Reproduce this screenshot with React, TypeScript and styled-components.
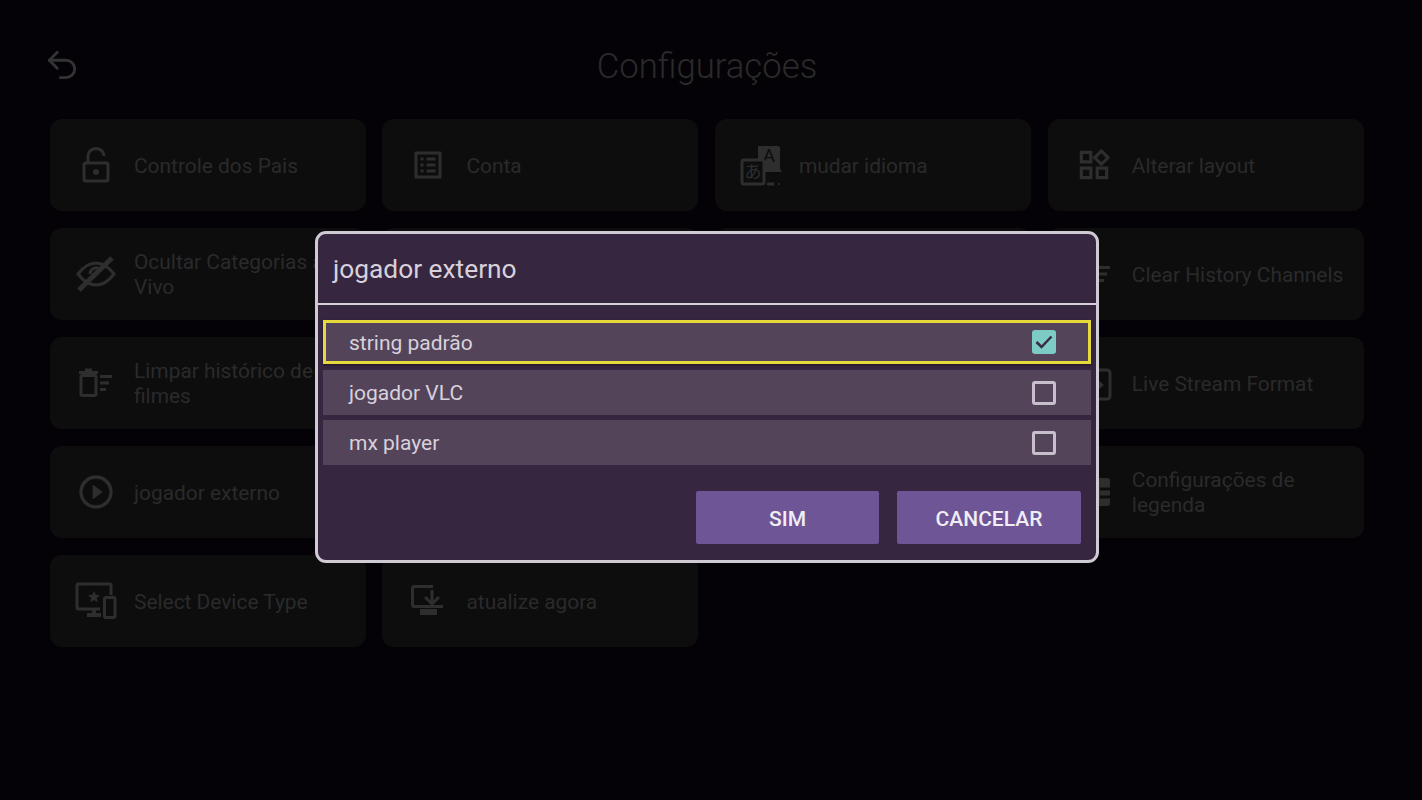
import { ReactNode } from "react"
import styled, { createGlobalStyle } from "styled-components"
import { MdOutlineListAlt, MdOutlinePlayCircleOutline, MdOutlineWidgets } from "react-icons/md"
import { LuUndo2 } from "react-icons/lu"

const GlobalStyle = createGlobalStyle`
  html, body {
    margin: 0;
    padding: 0;
    background: #040206;
    font-family: Roboto, "Liberation Sans", sans-serif;
  }
`

const Page = styled.div`
  position: relative;
  width: 1422px;
  height: 800px;
  overflow: hidden;
  padding: 40px 58px 0 50px;
  box-sizing: border-box;
  background: #040206;
`

const Header = styled.header`
  display: grid;
  grid-template-columns: 1fr auto 1fr;
  align-items: center;
  height: 52px;
  margin-bottom: 27px;
  color: #2a2a2b;
`

const BackButton = styled.div`
  display: flex;
  margin: -3px 0 0 -7px;
  font-size: 38px;
  color: #333334;
`

const Title = styled.h1`
  margin: 0;
  font-size: 34.700px;
  font-weight: 300;
  line-height: 50px;
`

const Grid = styled.div`
  display: grid;
  grid-template-columns: 316px 316px 316.500px 316px;
  grid-auto-rows: 92px;
  column-gap: 16.450px;
  row-gap: 17px;
`

const Card = styled.div`
  display: flex;
  align-items: center;
  gap: 18px;
  padding: 0 16px 0 26px;
  border-radius: 12px;
  background: #0d0d0e;
  color: #2a2a2b;
  font-size: 20.900px;
  line-height: 25px;
`

const CardIcon = styled.div`
  flex: 0 0 40px;
  display: flex;
  justify-content: center;
  align-items: center;
  height: 40px;
  color: #2e2e2f;
`

const CardLabel = styled.span`
  padding-top: 2px;
`

const Glyph = styled.svg`
  display: block;
  overflow: visible;
  fill: none;
  stroke: currentColor;
  stroke-width: 3;
`

const LockIcon = () => (
  <Glyph width="28" height="36" viewBox="0 0 28 36">
    <rect x="2" y="16" width="24" height="18" rx="2" />
    <path d="M6 16V9a8 7.500 0 0 1 16 0" />
    <circle cx="14" cy="25" r="3" fill="currentColor" stroke="none" />
  </Glyph>
)

const EyeOffIcon = () => (
  <Glyph width="40" height="36" viewBox="0 0 40 36">
    <path d="M2 18C8 10 14 7 20 7s12 3 18 11c-6 8-12 11-18 11S8 26 2 18z" />
    <path d="M14 18a6 6 0 0 1 10-4.500" />
    <path d="M3 34L36 2" strokeWidth="5" />
  </Glyph>
)

const TrashListIcon = () => (
  <Glyph width="34" height="28" viewBox="0 0 34 28">
    <rect x="2" y="6.500" width="15" height="20" rx="1.500" />
    <path d="M0 3.500h19M6 1h7" />
    <path d="M21 7.500h12M21 14h9M21 20.500h6" />
  </Glyph>
)

const LanguageIcon = () => (
  <Glyph width="40" height="40" viewBox="0 0 40 40" strokeWidth="2">
    <path d="M17 1h20a2 2 0 0 1 2 2v21l2 3H24a2 2 0 0 1-7-3z" fill="#2e2e2f" stroke="none" />
    <text x="28" y="17" fontSize="19" fontFamily="Roboto, sans-serif" textAnchor="middle" fill="#0d0d0e" stroke="none">A</text>
    <rect x="1" y="15" width="22" height="24" rx="2" fill="#0d0d0e" />
    <text x="12" y="33" fontSize="17" fontFamily='"Noto Sans CJK JP", sans-serif' textAnchor="middle" fill="currentColor" stroke="none">あ</text>
    <path d="M26 39h7" />
    <circle cx="38" cy="39" r="1" fill="currentColor" stroke="none" />
  </Glyph>
)

const MonitorIcon = () => (
  <Glyph width="40" height="36" viewBox="0 0 40 36">
    <path d="M24 26H2.500a1.500 1.500 0 0 1-1.500-1.500V2.500A1.500 1.500 0 0 1 2.500 1h31A1.500 1.500 0 0 1 35 2.500V12" />
    <path d="M18 8l1.700 3.800 4.300.4-3.200 2.800 1 4.200-3.800-2.200-3.800 2.200 1-4.200-3.200-2.800 4.300-.4z" fill="currentColor" stroke="none" />
    <path d="M11 32h14M18 26v6" strokeWidth="4" />
    <rect x="28.500" y="14.500" width="10.500" height="20" rx="1.500" />
  </Glyph>
)

const DownloadIcon = () => (
  <Glyph width="34" height="32" viewBox="0 0 34 32">
    <path d="M22 1.500H3A1.500 1.500 0 0 0 1.500 3v17A1.500 1.500 0 0 0 3 21.500h29" />
    <path d="M21 5v14M14 12l7 7 7-7" />
    <path d="M9 24h17v6H9z" fill="currentColor" stroke="none" />
  </Glyph>
)

const StreamIcon = () => (
  <Glyph width="40" height="36" viewBox="0 0 40 36">
    <rect x="12" y="5" width="24" height="29" rx="3" />
    <path d="M24 15l6 5-6 5z" fill="currentColor" stroke="none" />
  </Glyph>
)

const SubtitleIcon = () => (
  <Glyph width="40" height="30" viewBox="0 0 40 30">
    <rect x="8" y="1" width="28" height="28" rx="3" fill="currentColor" stroke="none" />
    <path d="M26 12h10M26 20h10" stroke="#0d0d0e" strokeWidth="3" />
  </Glyph>
)

type Item = { label?: string; icon?: ReactNode }

const items: Item[] = [
  { label: "Controle dos Pais", icon: <LockIcon /> },
  { label: "Conta", icon: <MdOutlineListAlt size={36} /> },
  { label: "mudar idioma", icon: <LanguageIcon /> },
  { label: "Alterar layout", icon: <MdOutlineWidgets size={38} /> },
  { label: "Ocultar Categorias ao Vivo", icon: <EyeOffIcon /> },
  {},
  {},
  { label: "Clear History Channels", icon: <TrashListIcon /> },
  { label: "Limpar histórico de filmes", icon: <TrashListIcon /> },
  {},
  {},
  { label: "Live Stream Format", icon: <StreamIcon /> },
  { label: "jogador externo", icon: <MdOutlinePlayCircleOutline size={40} /> },
  {},
  {},
  { label: "Configurações de legenda", icon: <SubtitleIcon /> },
  { label: "Select Device Type", icon: <MonitorIcon /> },
  { label: "atualize agora", icon: <DownloadIcon /> },
]

const Dialog = styled.div`
  position: absolute;
  left: 315px;
  top: 231px;
  width: 784px;
  height: 332px;
  box-sizing: border-box;
  display: flex;
  flex-direction: column;
  border: 3px solid #cfcad3;
  border-radius: 11px;
  background: #36263f;
  color: #d8d1dc;
`

const DialogTitle = styled.div`
  display: flex;
  align-items: center;
  height: 69px;
  padding: 0 15px;
  border-bottom: 2px solid #d4cfd8;
  font-size: 26.300px;
`

const OptionList = styled.div`
  display: flex;
  flex-direction: column;
  gap: 5px;
  padding: 15px 5px 0;
`

const Option = styled.div<{ $selected?: boolean }>`
  display: flex;
  align-items: center;
  justify-content: space-between;
  height: ${({ $selected }) => ($selected ? "44px" : "45px")};
  margin-bottom: ${({ $selected }) => ($selected ? "1px" : "0")};
  box-sizing: border-box;
  padding: ${({ $selected }) => ($selected ? "0 32px 0 23px" : "0 35px 0 26px")};
  border: ${({ $selected }) => ($selected ? "3px solid #e6d93c" : "none")};
  box-shadow: ${({ $selected }) => ($selected ? "0 1px 2px rgba(20, 8, 30, 0.6)" : "none")};
  background: #54445a;
  font-size: 21px;
`

const OptionLabel = styled.span`
  padding-top: 1px;
`

const Checkbox = styled.div<{ $checked?: boolean }>`
  display: flex;
  align-items: center;
  justify-content: center;
  width: 24px;
  height: 24px;
  box-sizing: border-box;
  border-radius: 3px;
  border: ${({ $checked }) => ($checked ? "none" : "3px solid #c8bfcc")};
  background: ${({ $checked }) => ($checked ? "#7ccbc4" : "transparent")};
`

const Actions = styled.div`
  display: flex;
  justify-content: flex-end;
  gap: 18px;
  margin-top: 26px;
  padding-right: 15.250px;
`

const ActionButton = styled.div`
  display: flex;
  align-items: center;
  justify-content: center;
  width: 183.500px;
  height: 53px;
  border-radius: 2px;
  background: #6e5596;
  color: #f1edf4;
  font-size: 21px;
  font-weight: 500;
`

const ActionLabel = styled.span`
  padding-top: 2px;
`

const options = ["string padrão", "jogador VLC", "mx player"]

export default function App() {
  return (
    <Page>
      <GlobalStyle />
      <Header>
        <BackButton>
          <LuUndo2 strokeWidth={1.800} />
        </BackButton>
        <Title>Configurações</Title>
      </Header>
      <Grid>
        {items.map((item, index) => (
          <Card key={index}>
            {item.icon && <CardIcon>{item.icon}</CardIcon>}
            {item.label && <CardLabel>{item.label}</CardLabel>}
          </Card>
        ))}
      </Grid>
      <Dialog>
        <DialogTitle>jogador externo</DialogTitle>
        <OptionList>
          {options.map((option, index) => (
            <Option key={option} $selected={index === 0}>
              <OptionLabel>{option}</OptionLabel>
              <Checkbox $checked={index === 0}>
                {index === 0 && (
                  <svg width="18" height="14" viewBox="0 0 18 14" fill="none" stroke="#3a2b43" strokeWidth="2.500">
                    <path d="M1.500 7l5 5L16.500 1.500" />
                  </svg>
                )}
              </Checkbox>
            </Option>
          ))}
        </OptionList>
        <Actions>
          <ActionButton><ActionLabel>SIM</ActionLabel></ActionButton>
          <ActionButton><ActionLabel>CANCELAR</ActionLabel></ActionButton>
        </Actions>
      </Dialog>
    </Page>
  )
}
